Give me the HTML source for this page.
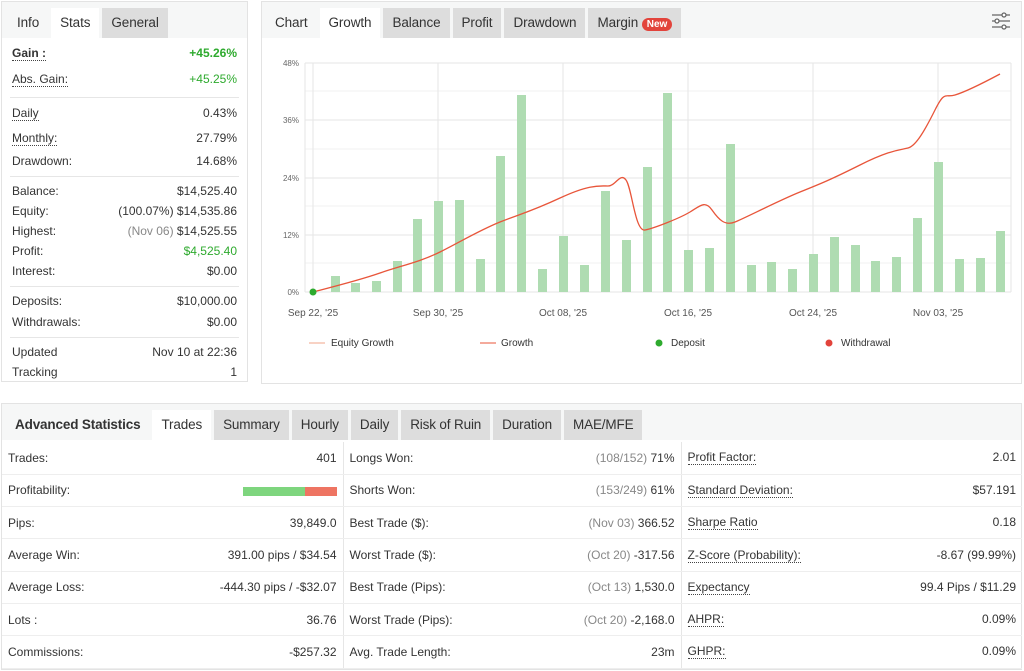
<!DOCTYPE html>
<html><head><meta charset="utf-8"><style>
*{box-sizing:border-box;margin:0;padding:0}
body{width:1024px;height:671px;background:#fff;font-family:"Liberation Sans",sans-serif;font-size:12px;color:#333;position:relative;overflow:hidden}
.panel{position:absolute;border:1px solid #e3e3e3;background:#fff}
.tabs{height:36px;background:#f6f7f7;display:flex;align-items:flex-end;padding-left:6px}
.tab{height:30px;line-height:30px;padding:0 9px;font-size:13.5px;color:#333;margin-right:3px;letter-spacing:-0.1px}
.tab.act{background:#fff}
.tab.g{background:#ddd}
.row{position:absolute;left:10px;right:10px;display:flex;justify-content:space-between;font-size:12px}
.u{border-bottom:1px dotted #444}
.sep{position:absolute;left:8px;right:8px;border-top:1px solid #e6e6e6}
.green{color:#2eaa2e}
.grey{color:#888}
table{border-collapse:collapse;position:absolute;left:0;top:38px;width:1020px}
td{height:32.3px;border-bottom:1px solid #eee;padding:0 6px;font-size:12px}
td.r{text-align:right;border-right:1px solid #e6e6e6}
.bt .tab{font-size:13.5px;padding:0 9px;letter-spacing:-0.15px}
</style></head><body>

<div class="panel" style="left:1px;top:1px;width:247px;height:381px">
 <div class="tabs"><div class="tab">Info</div><div class="tab act">Stats</div><div class="tab g">General</div></div>
 <div class="row" style="top:44px"><b class="u">Gain :</b><b class="green">+45.26%</b></div>
 <div class="row" style="top:70px"><span class="u">Abs. Gain:</span><span class="green">+45.25%</span></div>
 <div class="sep" style="top:95px"></div>
 <div class="row" style="top:104px"><span class="u">Daily</span><span>0.43%</span></div>
 <div class="row" style="top:129px"><span class="u">Monthly:</span><span>27.79%</span></div>
 <div class="row" style="top:152px"><span>Drawdown:</span><span>14.68%</span></div>
 <div class="sep" style="top:174px"></div>
 <div class="row" style="top:182px"><span>Balance:</span><span>$14,525.40</span></div>
 <div class="row" style="top:202px"><span>Equity:</span><span>(100.07%) $14,535.86</span></div>
 <div class="row" style="top:222px"><span>Highest:</span><span><span class="grey">(Nov 06)</span> $14,525.55</span></div>
 <div class="row" style="top:242px"><span>Profit:</span><span class="green">$4,525.40</span></div>
 <div class="row" style="top:262px"><span>Interest:</span><span>$0.00</span></div>
 <div class="sep" style="top:284px"></div>
 <div class="row" style="top:292px"><span>Deposits:</span><span>$10,000.00</span></div>
 <div class="row" style="top:313px"><span>Withdrawals:</span><span>$0.00</span></div>
 <div class="sep" style="top:335px"></div>
 <div class="row" style="top:343px"><span>Updated</span><span>Nov 10 at 22:36</span></div>
 <div class="row" style="top:363px"><span>Tracking</span><span>1</span></div>
</div>

<div class="panel" style="left:261px;top:1px;width:761px;height:383px">
 <div class="tabs" style="padding-left:4px"><div class="tab">Chart</div><div class="tab act">Growth</div><div class="tab g">Balance</div><div class="tab g">Profit</div><div class="tab g">Drawdown</div><div class="tab g">Margin <span style="background:#e2433b;color:#fff;font-size:10px;border-radius:7px;padding:1px 5px;font-weight:bold;letter-spacing:0">New</span></div></div>
 <svg style="position:absolute;left:728px;top:9px" width="22" height="20" viewBox="0 0 22 20" fill="none" stroke="#666" stroke-width="1.3"><line x1="2" y1="4" x2="20" y2="4"/><line x1="2" y1="10" x2="20" y2="10"/><line x1="2" y1="16" x2="20" y2="16"/><circle cx="14" cy="4" r="2" fill="#fff"/><circle cx="7" cy="10" r="2" fill="#fff"/><circle cx="14" cy="16" r="2" fill="#fff"/></svg>
</div>

<svg style="position:absolute;left:0;top:0" width="1024" height="400" font-family="Liberation Sans" font-size="9" fill="#666">
 <g stroke="#f2f2f2"><line x1="305" y1="91" x2="1011" y2="91"/><line x1="305" y1="149" x2="1011" y2="149"/><line x1="305" y1="206" x2="1011" y2="206"/><line x1="305" y1="263" x2="1011" y2="263"/></g>
 <g stroke="#e6e6e6"><line x1="305" y1="63" x2="1011" y2="63"/><line x1="305" y1="120" x2="1011" y2="120"/><line x1="305" y1="178" x2="1011" y2="178"/><line x1="305" y1="235" x2="1011" y2="235"/><line x1="305" y1="292" x2="1011" y2="292"/>
 <line x1="305" y1="63" x2="305" y2="292"/><line x1="313" y1="63" x2="313" y2="292"/><line x1="438" y1="63" x2="438" y2="292"/><line x1="563" y1="63" x2="563" y2="292"/><line x1="688" y1="63" x2="688" y2="292"/><line x1="813" y1="63" x2="813" y2="292"/><line x1="938" y1="63" x2="938" y2="292"/><line x1="1011" y1="63" x2="1011" y2="292"/></g>
 <g text-anchor="end" font-size="8"><text x="299" y="66">48%</text><text x="299" y="123">36%</text><text x="299" y="181">24%</text><text x="299" y="238">12%</text><text x="299" y="295">0%</text></g>
 <g fill="#afdcb2">
 <rect x="331" y="276" width="9" height="16"/><rect x="351" y="283" width="9" height="9"/><rect x="372" y="281" width="9" height="11"/><rect x="393" y="261" width="9" height="31"/><rect x="413" y="219" width="9" height="73"/><rect x="434" y="201" width="9" height="91"/><rect x="455" y="200" width="9" height="92"/><rect x="476" y="259" width="9" height="33"/><rect x="496" y="156" width="9" height="136"/><rect x="517" y="95" width="9" height="197"/><rect x="538" y="269" width="9" height="23"/><rect x="559" y="236" width="9" height="56"/><rect x="580" y="265" width="9" height="27"/><rect x="601" y="191" width="9" height="101"/><rect x="622" y="240" width="9" height="52"/><rect x="643" y="167" width="9" height="125"/><rect x="663" y="93" width="9" height="199"/><rect x="684" y="250" width="9" height="42"/><rect x="705" y="248" width="9" height="44"/><rect x="726" y="144" width="9" height="148"/><rect x="747" y="265" width="9" height="27"/><rect x="767" y="262" width="9" height="30"/><rect x="788" y="269" width="9" height="23"/><rect x="809" y="254" width="9" height="38"/><rect x="830" y="237" width="9" height="55"/><rect x="851" y="245" width="9" height="47"/><rect x="871" y="261" width="9" height="31"/><rect x="892" y="257" width="9" height="35"/><rect x="913" y="218" width="9" height="74"/><rect x="934" y="162" width="9" height="130"/><rect x="955" y="259" width="9" height="33"/><rect x="976" y="258" width="9" height="34"/><rect x="996" y="231" width="9" height="61"/>
 </g>
 <path d="M313 292 C340 285,360 280,380 273 S420 262,440 252 S480 230,500 222 S530 212,560 198 S600 186,608 186 S620 172,626 180 S635 232,645 230 S680 218,690 212 S705 200,712 210 S725 226,735 222 S780 200,800 192 S830 180,860 165 S900 150,908 148 S925 130,935 110 S945 98,955 95 S985 82,1000 74" fill="none" stroke="#e8553a" stroke-width="1.3"/>
 <circle cx="313" cy="292" r="3.5" fill="#2eaa2e"/>
 <g font-size="10" fill="#555" text-anchor="middle"><text x="313" y="316">Sep 22, '25</text><text x="438" y="316">Sep 30, '25</text><text x="563" y="316">Oct 08, '25</text><text x="688" y="316">Oct 16, '25</text><text x="813" y="316">Oct 24, '25</text><text x="938" y="316">Nov 03, '25</text></g>
 <g font-size="10" fill="#333"><line x1="309" y1="343" x2="325" y2="343" stroke="#f0a58a"/><text x="331" y="346">Equity Growth</text>
 <line x1="480" y1="343" x2="496" y2="343" stroke="#e8553a"/><text x="501" y="346">Growth</text>
 <circle cx="659" cy="343" r="3.5" fill="#2eaa2e"/><text x="671" y="346">Deposit</text>
 <circle cx="829" cy="343" r="3.5" fill="#e2433b"/><text x="841" y="346">Withdrawal</text></g>
</svg>

<div class="panel" style="left:1px;top:403px;width:1021px;height:267px">
 <div class="tabs bt" style="height:36px;padding-left:4px"><div class="tab" style="font-weight:bold;color:#333">Advanced Statistics</div><div class="tab act">Trades</div><div class="tab g">Summary</div><div class="tab g">Hourly</div><div class="tab g">Daily</div><div class="tab g">Risk of Ruin</div><div class="tab g">Duration</div><div class="tab g">MAE/MFE</div></div>
 <table>
 <colgroup><col style="width:341px"><col style="width:338px"><col style="width:341px"></colgroup>
 <tr><td class="r"><span style="float:left">Trades:</span>401</td><td class="r"><span style="float:left">Longs Won:</span><span class="grey">(108/152)</span> 71%</td><td style="text-align:right"><span style="float:left" class="u">Profit Factor:</span>2.01</td></tr>
 <tr><td class="r"><span style="float:left">Profitability:</span><span style="display:inline-block;width:62px;height:9px;background:#7ed57e;vertical-align:middle"></span><span style="display:inline-block;width:32px;height:9px;background:#ee7462;vertical-align:middle"></span></td><td class="r"><span style="float:left">Shorts Won:</span><span class="grey">(153/249)</span> 61%</td><td style="text-align:right"><span style="float:left" class="u">Standard Deviation:</span>$57.191</td></tr>
 <tr><td class="r"><span style="float:left">Pips:</span>39,849.0</td><td class="r"><span style="float:left">Best Trade ($):</span><span class="grey">(Nov 03)</span> 366.52</td><td style="text-align:right"><span style="float:left" class="u">Sharpe Ratio</span>0.18</td></tr>
 <tr><td class="r"><span style="float:left">Average Win:</span>391.00 pips / $34.54</td><td class="r"><span style="float:left">Worst Trade ($):</span><span class="grey">(Oct 20)</span> -317.56</td><td style="text-align:right"><span style="float:left" class="u">Z-Score (Probability):</span>-8.67 (99.99%)</td></tr>
 <tr><td class="r"><span style="float:left">Average Loss:</span>-444.30 pips / -$32.07</td><td class="r"><span style="float:left">Best Trade (Pips):</span><span class="grey">(Oct 13)</span> 1,530.0</td><td style="text-align:right"><span style="float:left" class="u">Expectancy</span>99.4 Pips / $11.29</td></tr>
 <tr><td class="r"><span style="float:left">Lots :</span>36.76</td><td class="r"><span style="float:left">Worst Trade (Pips):</span><span class="grey">(Oct 20)</span> -2,168.0</td><td style="text-align:right"><span style="float:left" class="u">AHPR:</span>0.09%</td></tr>
 <tr><td class="r"><span style="float:left">Commissions:</span>-$257.32</td><td class="r"><span style="float:left">Avg. Trade Length:</span>23m</td><td style="text-align:right"><span style="float:left" class="u">GHPR:</span>0.09%</td></tr>
 </table>
</div>
</body></html>
